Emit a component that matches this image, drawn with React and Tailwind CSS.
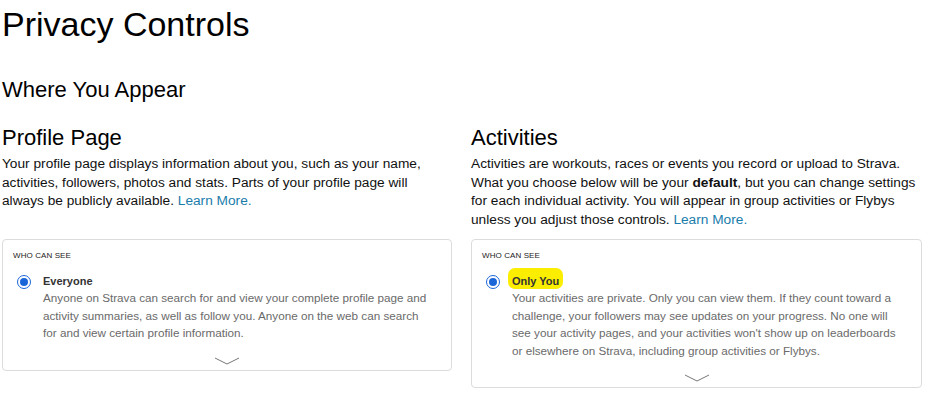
const font = { fontFamily: '"Liberation Sans", Arial, sans-serif' };

function Chevron() {
  return (
    <svg width="26" height="8" viewBox="0 0 26 8" className="mx-auto block">
      <path d="M1 1 L13 7 L25 1" fill="none" stroke="#777" strokeWidth="1" />
    </svg>
  );
}

function Radio() {
  return (
    <div className="w-[14px] h-[14px] shrink-0 rounded-full border-[1.5px] border-[#1a66d9] flex items-center justify-center">
      <div className="w-[8px] h-[8px] rounded-full bg-[#1a66d9]" />
    </div>
  );
}

function Card({ title, highlight, lines }) {
  return (
    <div className="border border-[#dcdcdc] rounded-[4px] px-[10px] pt-[11px] pb-[5px]">
      <div className="text-[8px] leading-[10px] text-[#222] tracking-[0.1px]">WHO CAN SEE</div>
      <div className="flex gap-[12px] mt-[14px] pl-[4px]">
        <Radio />
        <div>
          <div className="text-[11px] leading-[13px] font-bold text-[#333]">
            {highlight ? (
              <span className="bg-[#fbee00] rounded-[7px] px-[4px] -mx-[4px] pt-[7px] pb-[2px]">{title}</span>
            ) : (
              title
            )}
          </div>
          <p className="text-[11.7px] leading-[17.5px] text-[#6a6a6a] mt-[1px] whitespace-nowrap">
            {lines.map((l, i) => (
              <span key={i} className="block">{l}</span>
            ))}
          </p>
        </div>
      </div>
      <div className="mt-[15px]">
        <Chevron />
      </div>
    </div>
  );
}

const link = "text-[#1a7cab]";

export default function App() {
  return (
    <div className="bg-white w-[946px] h-[401px] pl-[2px] text-black" style={font}>
      <h1 className="text-[34px] leading-[40px] pt-[4px]">Privacy Controls</h1>
      <h2 className="text-[22px] leading-[26px] mt-[33px]">Where You Appear</h2>
      <div className="grid grid-cols-[450px_451px] gap-x-[19px] gap-y-[10px] mt-[22px]">
        <div>
          <h3 className="text-[22px] leading-[26px]">Profile Page</h3>
          <p className="text-[13.7px] leading-[18.5px] mt-[4px] text-[#111] whitespace-nowrap">
            Your profile page displays information about you, such as your name,
            <br />
            activities, followers, photos and stats. Parts of your profile page will
            <br />
            always be publicly available. <span className={link}>Learn More.</span>
          </p>
        </div>
        <div>
          <h3 className="text-[22px] leading-[26px]">Activities</h3>
          <p className="text-[13.7px] leading-[18.5px] mt-[4px] text-[#111] whitespace-nowrap">
            Activities are workouts, races or events you record or upload to Strava.
            <br />
            What you choose below will be your <b>default</b>, but you can change settings
            <br />
            for each individual activity. You will appear in group activities or Flybys
            <br />
            unless you adjust those controls. <span className={link}>Learn More.</span>
          </p>
        </div>
        <div className="self-start">
          <Card
            title="Everyone"
            lines={[
              "Anyone on Strava can search for and view your complete profile page and",
              "activity summaries, as well as follow you. Anyone on the web can search",
              "for and view certain profile information.",
            ]}
          />
        </div>
        <div className="self-start">
          <Card
            title="Only You"
            highlight
            lines={[
              "Your activities are private. Only you can view them. If they count toward a",
              "challenge, your followers may see updates on your progress. No one will",
              "see your activity pages, and your activities won't show up on leaderboards",
              "or elsewhere on Strava, including group activities or Flybys.",
            ]}
          />
        </div>
      </div>
    </div>
  );
}
